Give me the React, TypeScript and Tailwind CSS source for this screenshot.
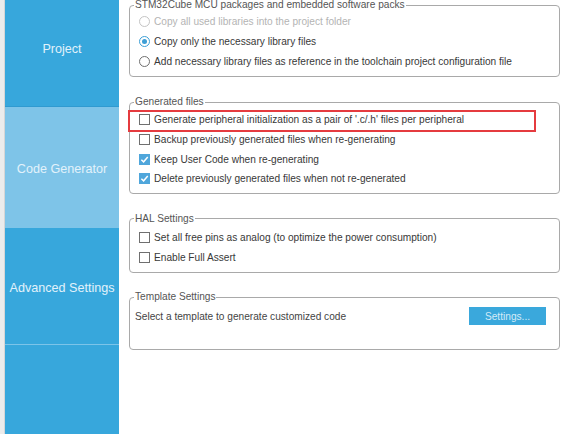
import React from "react";

const font = { fontFamily: '"Liberation Sans", Arial, sans-serif' };

function Radio({ checked, disabled }: { checked?: boolean; disabled?: boolean }) {
  return (
    <span
      className={
        "flex items-center justify-center w-[11px] h-[11px] rounded-full border bg-white shrink-0 " +
        (disabled
          ? "border-[#c4c4c4]"
          : checked
            ? "border-[#3d9fd6]"
            : "border-[#6f6f6f]")
      }
    >
      {checked && <span className="w-[5px] h-[5px] rounded-full bg-[#3d9fd6]" />}
    </span>
  );
}

function Checkbox({ checked }: { checked?: boolean }) {
  return checked ? (
    <span className="flex items-center justify-center w-[11px] h-[11px] bg-[#4fa6db] shrink-0">
      <svg width="9" height="9" viewBox="0 0 10 10">
        <path d="M1.5 5.2 L4 7.6 L8.6 2.2" fill="none" stroke="white" strokeWidth="1.6" />
      </svg>
    </span>
  ) : (
    <span className="w-[11px] h-[11px] border border-[#6f6f6f] bg-white shrink-0" />
  );
}

function Row({
  children,
  control,
  disabled,
}: {
  children: React.ReactNode;
  control: React.ReactNode;
  disabled?: boolean;
}) {
  return (
    <div className="flex items-center h-[19.7px] pl-[9px] gap-[4px]">
      {control}
      <span className={disabled ? "text-[#b4b4b4]" : "text-[#383838]"}>{children}</span>
    </div>
  );
}

function Group({
  title,
  className,
  children,
}: {
  title: string;
  className?: string;
  children: React.ReactNode;
}) {
  return (
    <fieldset
      className={
        "relative border border-[#a9a9a9] rounded-[4px] p-0 m-0 min-w-0 " + (className || "")
      }
    >
      <legend className="ml-[4px] px-[1px] leading-[12px] text-[#555]">{title}</legend>
      {children}
    </fieldset>
  );
}

export default function App() {
  return (
    <div className="flex h-[434px] w-[561px] overflow-hidden bg-white text-[10.15px]" style={font}>
      <div className="w-[5px] bg-[#ececec] border-r border-[#d6d6d6]" />

      <div className="w-[114px] flex flex-col bg-[#37a7dc] text-[12.6px] text-[#e2f2fb]">
        <div className="h-[107px] flex items-center justify-center pb-[7px] border-b border-[#2f9ad0]">
          Project
        </div>
        <div className="h-[121px] flex items-center justify-center pt-[4px] bg-[#7ec4e8]">
          Code Generator
        </div>
        <div className="h-[117px] flex items-center justify-center pt-[5px] border-b border-[#7cc4e9]">
          Advanced Settings
        </div>
        <div className="flex-1" />
      </div>

      <div className="flex-1 flex flex-col pl-[10px] pr-[1px] mt-[-1px]">
        <Group title="STM32Cube MCU packages and embedded software packs">
          <div className="pt-[1px] pb-[5px]">
            <Row control={<Radio disabled />} disabled>
              Copy all used libraries into the project folder
            </Row>
            <Row control={<Radio checked />}>Copy only the necessary library files</Row>
            <Row control={<Radio />}>
              Add necessary library files as reference in the toolchain project configuration file
            </Row>
          </div>
        </Group>

        <Group title="Generated files" className="mt-[19px]">
          <div className="pt-[2px] pb-[4px]">
            <Row control={<Checkbox />}>
              Generate peripheral initialization as a pair of '.c/.h' files per peripheral
            </Row>
            <Row control={<Checkbox />}>Backup previously generated files when re-generating</Row>
            <Row control={<Checkbox checked />}>Keep User Code when re-generating</Row>
            <Row control={<Checkbox checked />}>
              Delete previously generated files when not re-generated
            </Row>
          </div>
          <div className="absolute left-[-2px] top-[2px] w-[408px] h-[22px] border-2 border-[#e53b3f]" />
        </Group>

        <Group title="HAL Settings" className="mt-[19px]">
          <div className="pt-[3px] pb-[5px]">
            <Row control={<Checkbox />}>
              Set all free pins as analog (to optimize the power consumption)
            </Row>
            <Row control={<Checkbox />}>Enable Full Assert</Row>
          </div>
        </Group>

        <Group title="Template Settings" className="mt-[18px]">
          <div className="flex items-center justify-between h-[22px] mt-[2px] mb-[22px] pl-[5px] pr-[13px]">
            <span className="text-[#444]">Select a template to generate customized code</span>
            <button className="w-[77px] h-[18px] bg-[#3aa8dc] text-[#d4ebf8]">Settings...</button>
          </div>
        </Group>
      </div>
    </div>
  );
}
